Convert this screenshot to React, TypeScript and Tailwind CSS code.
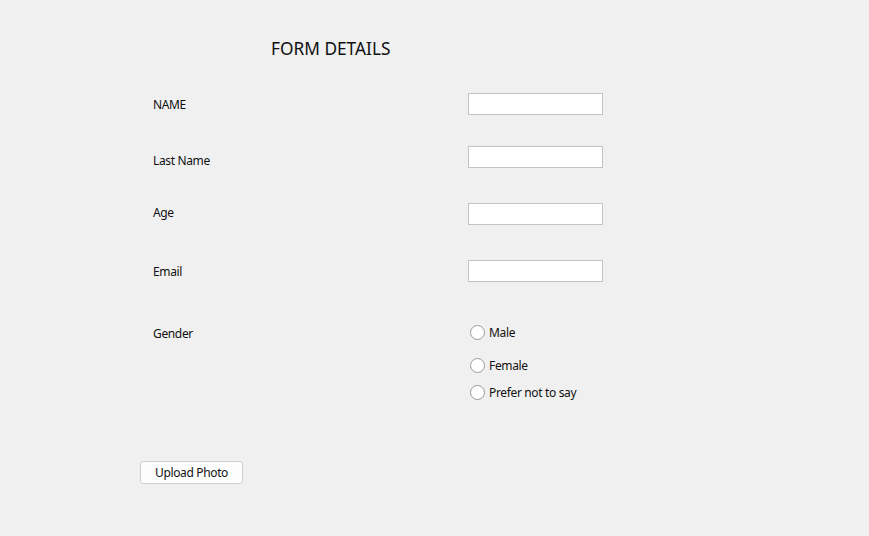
export default function App() {
  const fields = [
    { label: 'NAME', gap: 'mt-[0px]', nudge: 'mt-[2px]' },
    { label: 'Last Name', gap: 'mt-[31px]', nudge: 'mt-[7px]' },
    { label: 'Age', gap: 'mt-[35px]', nudge: 'mt-[-3px]' },
    { label: 'Email', gap: 'mt-[35px]', nudge: 'mt-[2px]' },
  ];
  const genders = [
    { label: 'Male', gap: 'mt-[0px]' },
    { label: 'Female', gap: 'mt-[17px]' },
    { label: 'Prefer not to say', gap: 'mt-[11px]' },
  ];

  return (
    <div
      className="w-[869px] h-[536px] bg-[#f0f0f0] text-[#111] text-[12px] tracking-[-0.35px] overflow-hidden"
      style={{ fontFamily: '"Noto Sans", "Open Sans", sans-serif' }}
    >
      <div className="pt-[38px] pl-[271px]">
        <h1 className="text-[17.3px] leading-[22px] font-normal tracking-normal">FORM DETAILS</h1>
      </div>

      <div className="mt-[33px] pl-[153px]">
        {fields.map((f) => (
          <div key={f.label} className={`flex items-center h-[22px] ${f.gap}`}>
            <span className={`w-[315px] ${f.nudge}`}>{f.label}</span>
            <input
              type="text"
              className="w-[135px] h-[22px] bg-white border border-[#c3c3c3] outline-none"
            />
          </div>
        ))}

        <div className="flex mt-[42px]">
          <span className="w-[315px] leading-[18px] pt-[1px]">Gender</span>
          <div className="flex flex-col">
            {genders.map((g) => (
              <label key={g.label} className={`flex items-center h-[16px] ${g.gap}`}>
                <span className="ml-[2px] w-[15px] h-[15px] rounded-full border border-[#9a9a9a] bg-white shrink-0"></span>
                <span className="ml-[4px] mt-[2px]">{g.label}</span>
              </label>
            ))}
          </div>
        </div>
      </div>

      <div className="mt-[61px] pl-[140px]">
        <button className="w-[103px] h-[23px] bg-[#fdfdfd] border border-[#cfcfcf] rounded-[3px] text-[12px] leading-none">
          Upload Photo
        </button>
      </div>
    </div>
  );
}
